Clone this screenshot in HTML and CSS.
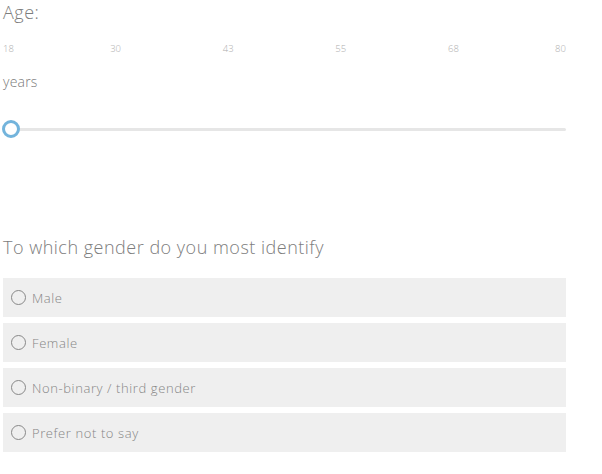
FILE: index.html
```html
<!DOCTYPE html>
<html>
<head>
<meta charset="utf-8">
<link rel="stylesheet" href="styles.css">
</head>
<body>
<div class="page">
  <section class="age">
    <div class="q-title">Age:</div>
    <div class="ticks">
      <span class="tick"><span>18</span></span>
      <span class="tick"><span>30</span></span>
      <span class="tick"><span>43</span></span>
      <span class="tick"><span>55</span></span>
      <span class="tick"><span>68</span></span>
      <span class="tick"><span>80</span></span>
    </div>
    <div class="unit">years</div>
    <div class="slider">
      <div class="track"></div>
      <div class="handle"></div>
    </div>
  </section>
  <section class="gender">
    <div class="q-title">To which gender do you most identify</div>
    <div class="options">
      <label class="option"><span class="radio"></span><span class="opt-text">Male</span></label>
      <label class="option"><span class="radio"></span><span class="opt-text">Female</span></label>
      <label class="option"><span class="radio"></span><span class="opt-text">Non-binary / third gender</span></label>
      <label class="option"><span class="radio"></span><span class="opt-text">Prefer not to say</span></label>
    </div>
  </section>
</div>
</body>
</html>
```
FILE: styles.css
```css
html, body {
  margin: 0;
  padding: 0;
  background: #fff;
}
body {
  font-family: "Open Sans", "Liberation Sans", sans-serif;
  font-weight: 300;
  color: #7a7a7a;
}
.page {
  width: 563px;
  padding: 0 0 0 3px;
}
.q-title {
  font-size: 18px;
  line-height: 24px;
  letter-spacing: 0.5px;
  color: #7d7d7d;
}
.ticks {
  display: flex;
  justify-content: space-between;
  font-size: 9.5px;
  line-height: 12px;
  color: #adadad;
  margin-top: 19px;
}
.tick {
  width: 0;
  display: flex;
  justify-content: center;
  white-space: nowrap;
}
.tick:first-child {
  justify-content: flex-start;
}
.tick:last-child {
  justify-content: flex-end;
}
.unit {
  font-size: 14px;
  line-height: 20px;
  letter-spacing: 0.2px;
  color: #7a7a7a;
  margin-top: 17px;
}
.slider {
  position: relative;
  height: 20px;
  margin-top: 27px;
}
.track {
  position: absolute;
  left: 8px;
  right: 0;
  top: 9px;
  height: 3px;
  background: #e6e6e6;
  border-radius: 2px;
}
.handle {
  position: absolute;
  left: -1px;
  top: 1px;
  width: 12px;
  height: 12px;
  border: 3px solid #73b4dc;
  border-radius: 50%;
  background: #fff;
}
.gender {
  margin-top: 96px;
}
.options {
  display: flex;
  flex-direction: column;
  gap: 6px;
  margin-top: 19px;
}
.option {
  display: flex;
  align-items: center;
  height: 39px;
  background: #efefef;
  padding-left: 8px;
  gap: 6px;
}
.radio {
  width: 15px;
  height: 15px;
  border: 1.5px solid #888;
  border-radius: 50%;
  box-sizing: border-box;
}
.opt-text {
  font-size: 13px;
  letter-spacing: 0.6px;
  color: #858585;
}
```
